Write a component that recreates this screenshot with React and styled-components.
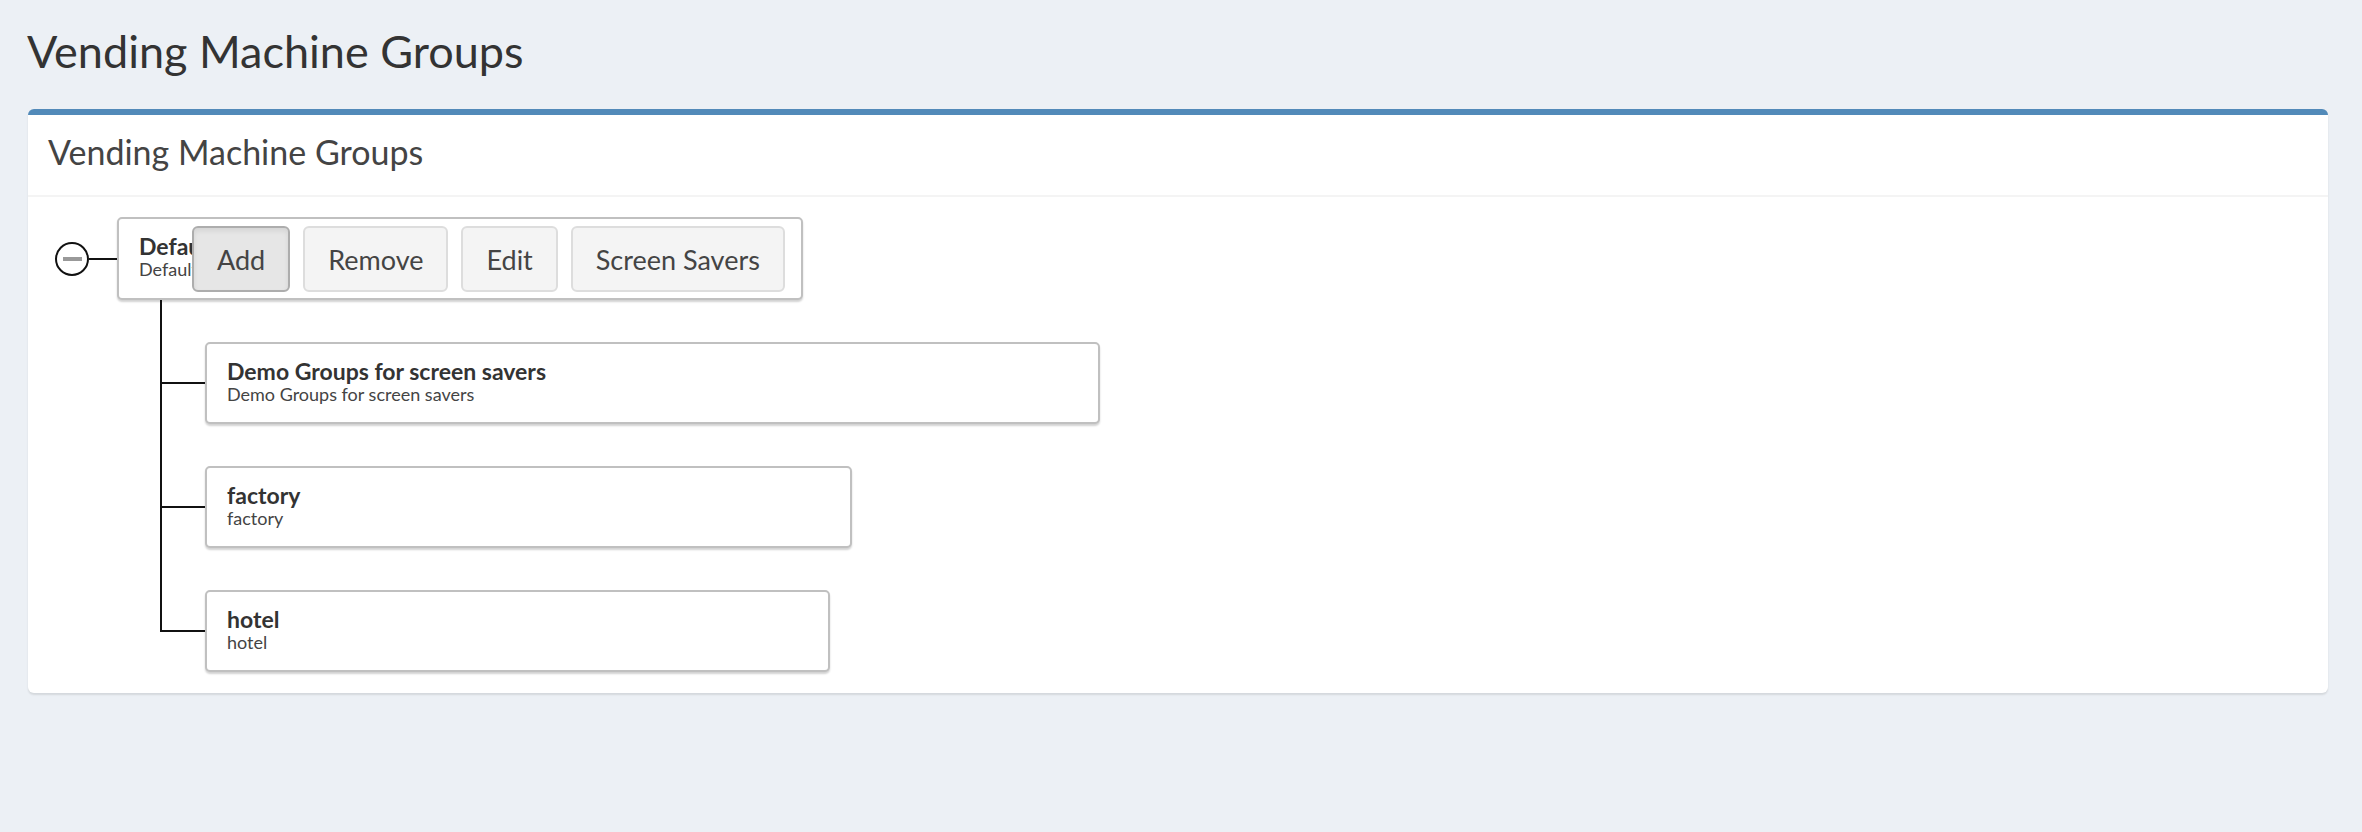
import React from "react";
import styled, { createGlobalStyle } from "styled-components";

const GlobalStyle = createGlobalStyle`
  html, body {
    margin: 0;
    padding: 0;
    background: #ecf0f5;
    font-family: Lato, "Open Sans", "Liberation Sans", sans-serif;
    color: #333;
  }
  * { box-sizing: border-box; }
`;

const Page = styled.div`
  min-height: 832px;
  padding: 26px 34px 0 28px;
`;

const PageTitle = styled.h1`
  margin: 0 0 33px -1px;
  font-size: 45px;
  line-height: 50px;
  font-weight: 400;
  color: #333;
`;

const Card = styled.section`
  background: #fff;
  border-top: 6px solid #528ab9;
  border-radius: 6px;
  box-shadow: 0 2px 2px rgba(0, 0, 0, 0.1);
`;

const CardHeader = styled.div`
  height: 82px;
  padding: 0 20px 6px;
  display: flex;
  align-items: center;
  border-bottom: 2px solid #f4f4f4;
`;

const CardTitle = styled.h3`
  margin: 0;
  font-size: 34px;
  line-height: 40px;
  font-weight: 400;
  color: #444;
`;

const CardBody = styled.div`
  padding: 20px 27px 21px;
`;

const RootRow = styled.div`
  display: flex;
  align-items: center;
`;

const Toggle = styled.span`
  width: 34px;
  height: 34px;
  border: 2px solid #111;
  border-radius: 50%;
  display: flex;
  align-items: center;
  justify-content: center;
  flex-shrink: 0;

  &::after {
    content: "";
    width: 19px;
    height: 4px;
    background: #999;
  }
`;

const Connector = styled.span`
  width: 28px;
  height: 2px;
  background: #111;
`;

const Node = styled.div`
  position: relative;
  width: ${({ $width }) => $width}px;
  height: ${({ $height }) => $height || 82}px;
  padding: 16px 20px 0;
  background: #fff;
  border: 2px solid #c0c0c0;
  border-radius: 5px;
  box-shadow: 0 2px 2px rgba(0, 0, 0, 0.18);
`;

const NodeName = styled.div`
  font-size: 23px;
  line-height: 23px;
  font-weight: 700;
  color: #333;
`;

const NodeDesc = styled.div`
  font-size: 18px;
  line-height: 22px;
  color: #444;
`;

const Toolbar = styled.div`
  position: absolute;
  top: 7px;
  left: 73px;
  display: flex;
  gap: 13px;
  background: #fff;
`;

const Button = styled.button`
  height: 66px;
  padding: 0 23px;
  font-family: inherit;
  font-size: 27px;
  color: #444;
  background: ${({ $active }) => ($active ? "#e6e6e6" : "#f4f4f4")};
  border: 2px solid ${({ $active }) => ($active ? "#adadad" : "#ddd")};
  border-radius: 6px;
  box-shadow: ${({ $active }) => ($active ? "inset 0 3px 5px rgba(0,0,0,0.08)" : "none")};
  cursor: pointer;
`;

const ChildList = styled.ul`
  list-style: none;
  margin: 0 0 0 105px;
  padding: 0;
`;

const ChildItem = styled.li`
  position: relative;
  padding: 42px 0 0 45px;

  &::before {
    content: "";
    position: absolute;
    left: 0;
    top: 0;
    width: 2px;
    height: 100%;
    background: #111;
  }

  &:last-child::before {
    height: 84px;
  }

  &::after {
    content: "";
    position: absolute;
    left: 0;
    top: 82px;
    width: 45px;
    height: 2px;
    background: #111;
  }
`;

const children = [
  { name: "Demo Groups for screen savers", desc: "Demo Groups for screen savers", width: 895 },
  { name: "factory", desc: "factory", width: 647 },
  { name: "hotel", desc: "hotel", width: 625 },
];

export default function App() {
  return (
    <>
      <GlobalStyle />
      <Page>
        <PageTitle>Vending Machine Groups</PageTitle>
        <Card>
          <CardHeader>
            <CardTitle>Vending Machine Groups</CardTitle>
          </CardHeader>
          <CardBody>
            <RootRow>
              <Toggle />
              <Connector />
              <Node $width={686} $height={83}>
                <NodeName>Default</NodeName>
                <NodeDesc>Default</NodeDesc>
                <Toolbar>
                  <Button $active>Add</Button>
                  <Button>Remove</Button>
                  <Button>Edit</Button>
                  <Button>Screen Savers</Button>
                </Toolbar>
              </Node>
            </RootRow>
            <ChildList>
              {children.map((c) => (
                <ChildItem key={c.name}>
                  <Node $width={c.width}>
                    <NodeName>{c.name}</NodeName>
                    <NodeDesc>{c.desc}</NodeDesc>
                  </Node>
                </ChildItem>
              ))}
            </ChildList>
          </CardBody>
        </Card>
      </Page>
    </>
  );
}
